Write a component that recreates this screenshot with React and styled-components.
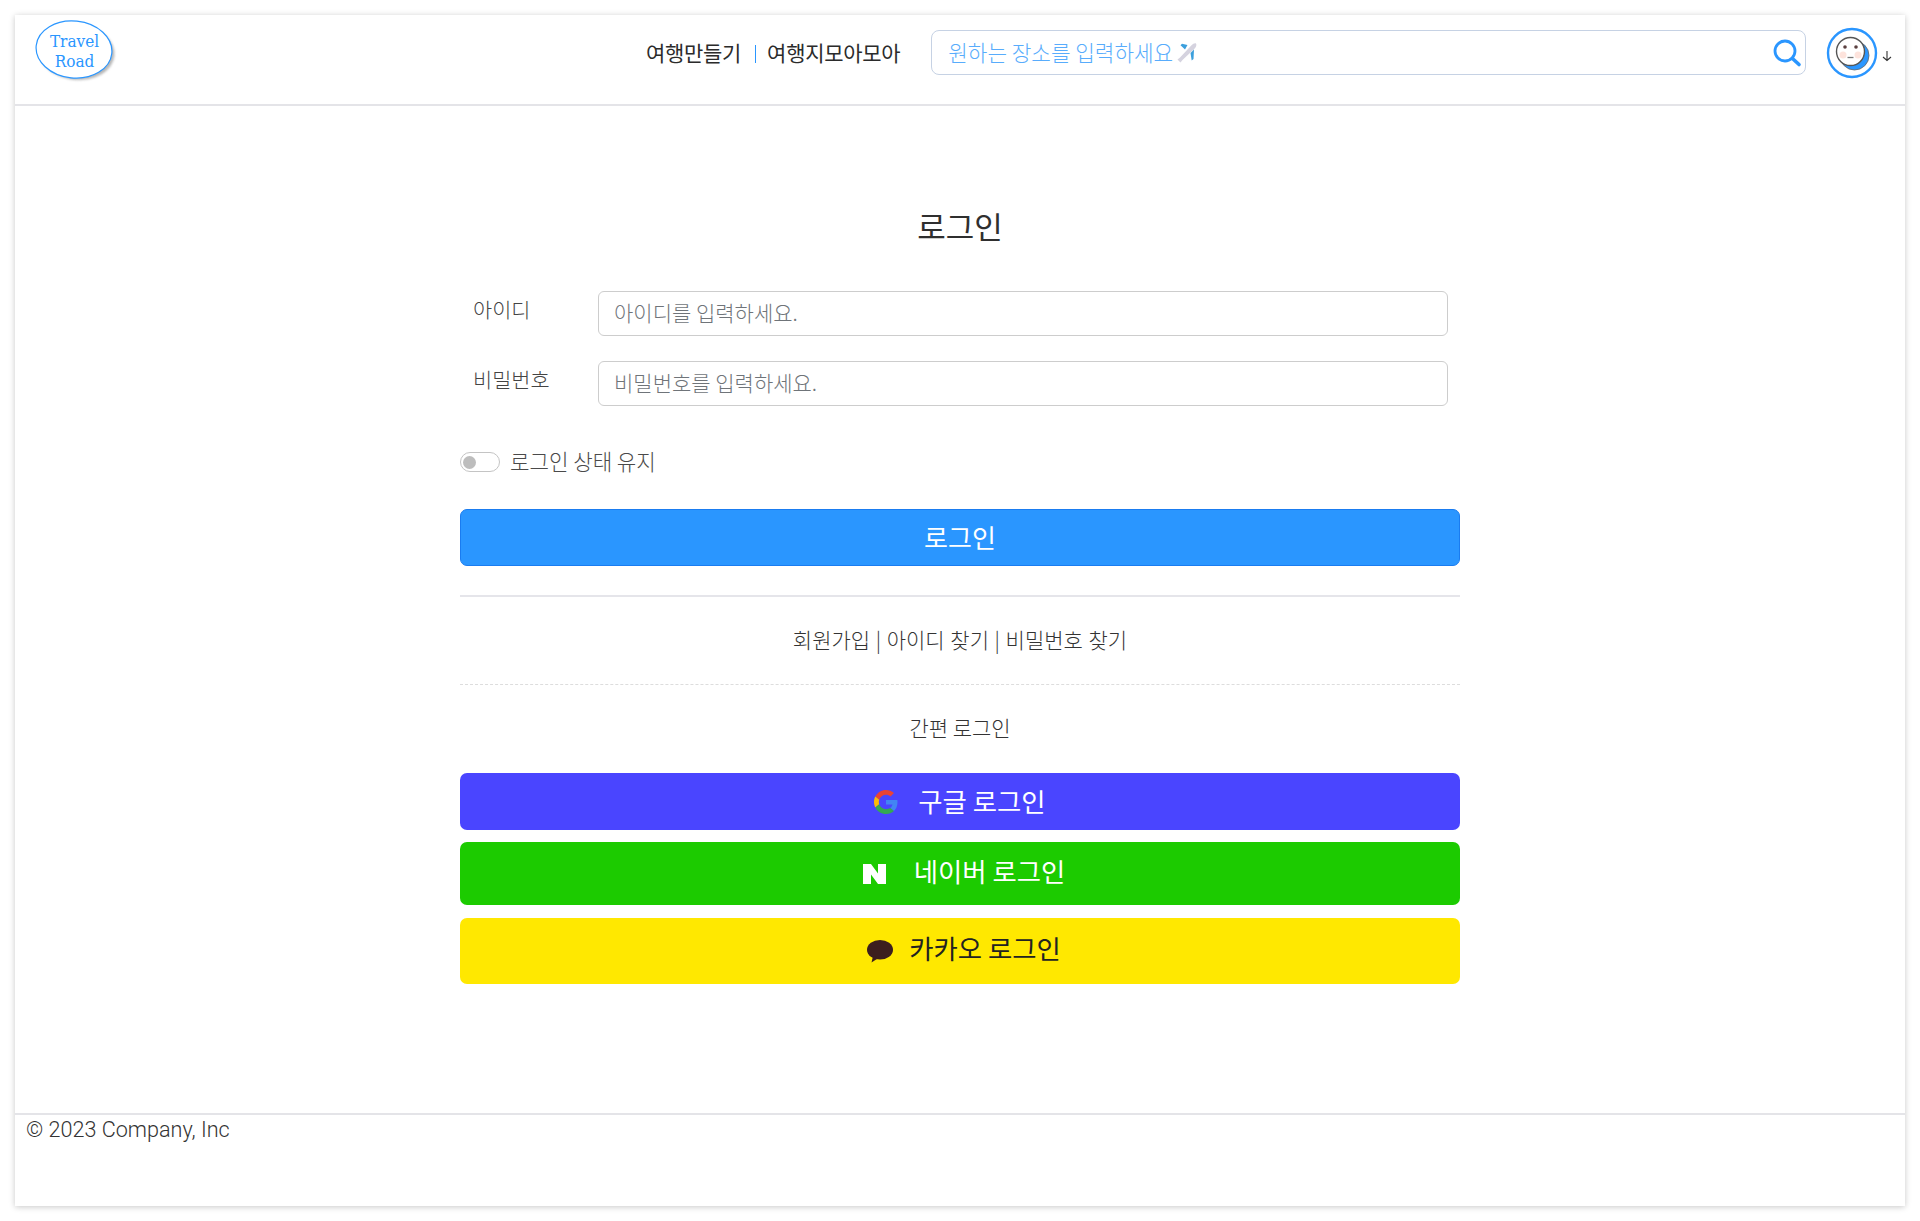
import React from 'react';
import styled, { createGlobalStyle } from 'styled-components';

const GlobalStyle = createGlobalStyle`
  html, body {
    margin: 0;
    padding: 0;
    background: #fff;
  }
  body {
    font-family: "Noto Sans CJK KR", "Noto Sans", sans-serif;
    font-weight: 300;
    color: #333;
  }
  * {
    box-sizing: border-box;
  }
`;

const Page = styled.div`
  height: 1221px;
  padding: 15px;
`;

const Card = styled.div`
  height: 1191px;
  display: flex;
  flex-direction: column;
  background: #fff;
  box-shadow: 0 1px 6px rgba(0, 0, 0, 0.22);
`;

// Header
const Header = styled.header`
  height: 91px;
  flex: none;
  display: flex;
  align-items: flex-start;
  border-bottom: 2px solid #e4e4e8;
  padding: 3px 12px 0 20px;
`;

const Logo = styled.svg`
  width: 84px;
  height: 66px;
  flex: none;
`;

const Nav = styled.nav`
  display: flex;
  align-items: center;
  height: 43px;
  margin: 12px 0 0 527px;
  font-size: 21px;
  font-weight: 400;
  color: #2b2b2b;
  letter-spacing: -0.3px;
  white-space: nowrap;
`;

const NavSeparator = styled.span`
  width: 1px;
  height: 18px;
  margin: 4px 11px 0 14px;
  background: #2a96ff;
`;

const SearchBox = styled.div`
  width: 875px;
  height: 45px;
  flex: none;
  margin: 12px 0 0 31px;
  display: flex;
  align-items: center;
  padding: 0 3px 0 16px;
  border: 1px solid #c6d2e4;
  border-radius: 8px;
`;

const SearchPlaceholder = styled.span`
  flex: 1;
  display: flex;
  align-items: center;
  gap: 3px;
  font-size: 21.3px;
  color: #58acfc;
  white-space: nowrap;
`;

const SearchText = styled.span`
  margin-bottom: 3px;
`;

const AvatarButton = styled.div`
  display: flex;
  align-items: center;
  margin: 9px 0 0 20px;
`;

// Login form
const Main = styled.main`
  flex: 1;
  display: flex;
  flex-direction: column;
  align-items: center;
  padding-top: 98px;
`;

const Title = styled.h1`
  margin: 0 0 43px;
  font-size: 31px;
  line-height: 44px;
  font-weight: 400;
  color: #2f2f2f;
`;

const Form = styled.div`
  width: 1000px;
`;

const FieldRow = styled.label`
  display: grid;
  grid-template-columns: 125px 850px;
  padding-left: 13px;
  margin-bottom: 25px;
`;

const FieldLabel = styled.span`
  font-size: 20.8px;
  line-height: 36px;
  color: #444;
`;

const FieldInput = styled.input`
  width: 850px;
  height: 45px;
  padding: 0 15px 3px;
  border: 1px solid #cdcdcd;
  border-radius: 6px;
  font-family: inherit;
  font-weight: 300;
  font-size: 21px;
  color: #333;
  &::placeholder {
    color: #6f7479;
    opacity: 1;
  }
`;

const KeepRow = styled.div`
  display: flex;
  align-items: center;
  gap: 10px;
  margin: 44px 0 0;
  height: 24px;
  font-size: 21.2px;
  color: #4a4a4a;
`;

const KeepText = styled.span`
  margin-bottom: 3px;
`;

const Toggle = styled.span`
  display: block;
  width: 40px;
  height: 20px;
  padding: 3px 2px;
  border: 1px solid #c4c4c4;
  border-radius: 10px;
  background: #fff;
  &::before {
    content: '';
    display: block;
    width: 13px;
    height: 13px;
    border-radius: 50%;
    background: #bdbdbd;
  }
`;

const LoginButton = styled.button`
  display: block;
  width: 100%;
  height: 57px;
  margin-top: 35px;
  padding: 0 0 3px;
  border: 1px solid #1a7cf0;
  border-radius: 7px;
  background: #2a96ff;
  color: #fff;
  font-family: inherit;
  font-weight: 400;
  font-size: 26px;
`;

const LinksRow = styled.div`
  margin-top: 29px;
  height: 90px;
  padding-bottom: 4px;
  display: flex;
  align-items: center;
  justify-content: center;
  border-top: 2px solid #e5e5ea;
  border-bottom: 1px dashed #ddd;
  font-size: 21px;
  color: #333;
  word-spacing: 1px;
`;

const SocialTitle = styled.div`
  height: 88px;
  padding-bottom: 4px;
  display: flex;
  align-items: center;
  justify-content: center;
  font-size: 21px;
  color: #333;
`;

const SocialButton = styled.div`
  width: 100%;
  height: ${(p) => p.$height}px;
  margin-bottom: ${(p) => p.$gap}px;
  padding-left: ${(p) => p.$shift}px;
  display: flex;
  align-items: center;
  justify-content: center;
  gap: ${(p) => p.$iconGap}px;
  border-radius: 7px;
  background: ${(p) => p.$bg};
  color: ${(p) => p.$color};
  font-size: 26.4px;
  font-weight: 400;
`;

const SocialLabel = styled.span`
  margin-bottom: ${(p) => p.$lift}px;
`;

// Footer
const Footer = styled.footer`
  height: 93px;
  flex: none;
  border-top: 2px solid #e4e4e8;
  padding: 0 11px;
  font-family: Roboto, "Liberation Sans", sans-serif;
  font-weight: 300;
  font-size: 21.6px;
  line-height: 30px;
  color: #333;
`;

const PlaneIcon = () => (
  <svg width="22" height="22" viewBox="0 0 22 22">
    <path d="M20 1.500c-1.300-.5-3 .3-4.500 1.800L4 15.500l-2.500 2 3 3 2-2.500L18.700 6.500C20.200 5 20.800 2.800 20 1.500z" fill="#d5d3df" />
    <path d="M11.500 3L6 1.800 4.500 3.300 9 7.500zM14.500 11l1.200 7.500 1.800-1.500 .5-9.500z" fill="#3c9fdc" />
  </svg>
);

const SearchIcon = () => (
  <svg width="30" height="30" viewBox="0 0 30 30" fill="none" stroke="#2a96ff" strokeLinecap="round">
    <circle cx="13" cy="13" r="10" strokeWidth="2.800" />
    <path d="M21 21l6 5.500" strokeWidth="3.600" />
  </svg>
);

const AvatarIcon = () => (
  <svg width="52" height="52" viewBox="0 0 52 52">
    <circle cx="26" cy="26" r="24" fill="#fff" stroke="#2a96ff" strokeWidth="2.400" />
    <circle cx="28.500" cy="28.500" r="14.500" fill="#2a96ff" stroke="#666" strokeWidth="0.800" />
    <circle cx="24.500" cy="24.500" r="14" fill="#fff" stroke="#555" strokeWidth="1.400" />
    <circle cx="17" cy="28" r="3.500" fill="#fde3dc" />
    <circle cx="32" cy="28" r="3.500" fill="#fde3dc" />
    <circle cx="19" cy="20" r="1.800" fill="#5b4040" />
    <circle cx="30" cy="20" r="1.800" fill="#5b4040" />
    <path d="M21.500 30.500h6" stroke="#777" strokeWidth="1.300" />
  </svg>
);

const DownArrow = () => (
  <svg width="10" height="12" viewBox="0 0 10 12" fill="none" stroke="#333" strokeWidth="1.100" style={{ marginLeft: 4, marginTop: 5 }}>
    <path d="M5 1v9M1 7l4 3.500L9 7" />
  </svg>
);

const GoogleIcon = () => (
  <svg width="24" height="24" viewBox="0 0 48 48">
    <path fill="#ea4335" d="M24 9.500c3.500 0 6.700 1.300 9.100 3.400l6.800-6.800C35.800 2.400 30.200 0 24 0 14.600 0 6.500 5.400 2.600 13.200l7.900 6.100C12.400 13.600 17.700 9.500 24 9.500z" />
    <path fill="#4285f4" d="M47 24.500c0-1.600-.2-3.100-.4-4.500H24v9h13c-.6 3-2.200 5.500-4.800 7.200l7.700 6C44.400 37.900 47 31.800 47 24.500z" />
    <path fill="#fbbc05" d="M10.500 28.700c-.5-1.400-.8-3-.8-4.700s.3-3.300.8-4.700l-7.900-6.100C1 16.400 0 20.100 0 24s1 7.600 2.600 10.800z" />
    <path fill="#34a853" d="M24 48c6.500 0 11.900-2.100 15.900-5.800l-7.700-6c-2.200 1.400-4.900 2.300-8.200 2.300-6.300 0-11.600-4.100-13.500-9.800l-7.900 6.100C6.500 42.600 14.600 48 24 48z" />
  </svg>
);

const NaverIcon = () => (
  <svg width="23" height="20" viewBox="0 0 23 20">
    <path fill="#fff" d="M0 0h8l7 9.500V0h8v20h-8L8 10.500V20H0z" />
  </svg>
);

const KakaoIcon = () => (
  <svg width="26" height="23" viewBox="0 0 26 23">
    <ellipse cx="13" cy="9.800" rx="13" ry="9.800" fill="#3c1e1e" />
    <path fill="#3c1e1e" d="M6 16l-1.500 6.500 7-4.500z" />
  </svg>
);

const App = () => (
  <>
    <GlobalStyle />
    <Page>
      <Card>
        <Header>
          <Logo viewBox="0 0 84 66">
            <defs>
              <filter id="logoShadow" x="-20%" y="-20%" width="140%" height="140%">
                <feGaussianBlur stdDeviation="1.200" />
              </filter>
            </defs>
            <ellipse cx="41.500" cy="34" rx="38" ry="28" transform="rotate(6 41 34)" fill="#999" opacity="0.7" filter="url(#logoShadow)" />
            <ellipse cx="39" cy="31.500" rx="38" ry="28.500" transform="rotate(6 39 31.500)" fill="#fff" stroke="#2a96ff" strokeWidth="1.200" />
            <text x="39.500" y="29" textAnchor="middle" fontFamily="DejaVu Serif Condensed, DejaVu Serif, serif" fontSize="17" fill="#2a96ff">Travel</text>
            <text x="39.500" y="49" textAnchor="middle" fontFamily="DejaVu Serif Condensed, DejaVu Serif, serif" fontSize="17" fill="#2a96ff">Road</text>
          </Logo>
          <Nav>
            <span>여행만들기</span>
            <NavSeparator />
            <span>여행지모아모아</span>
          </Nav>
          <SearchBox>
            <SearchPlaceholder>
              <SearchText>원하는 장소를 입력하세요</SearchText>
              <PlaneIcon />
            </SearchPlaceholder>
            <SearchIcon />
          </SearchBox>
          <AvatarButton>
            <AvatarIcon />
            <DownArrow />
          </AvatarButton>
        </Header>
        <Main>
          <Title>로그인</Title>
          <Form>
            <FieldRow>
              <FieldLabel>아이디</FieldLabel>
              <FieldInput placeholder="아이디를 입력하세요." />
            </FieldRow>
            <FieldRow>
              <FieldLabel>비밀번호</FieldLabel>
              <FieldInput type="password" placeholder="비밀번호를 입력하세요." />
            </FieldRow>
            <KeepRow>
              <Toggle />
              <KeepText>로그인 상태 유지</KeepText>
            </KeepRow>
            <LoginButton>로그인</LoginButton>
            <LinksRow>회원가입 | 아이디 찾기 | 비밀번호 찾기</LinksRow>
            <SocialTitle>간편 로그인</SocialTitle>
            <SocialButton $bg="#4a45ff" $color="#fff" $height={57} $gap={12} $iconGap={20} $shift={0}>
              <GoogleIcon />
              <SocialLabel $lift={2}>구글 로그인</SocialLabel>
            </SocialButton>
            <SocialButton $bg="#1ccb00" $color="#fff" $height={63} $gap={13} $iconGap={28} $shift={8}>
              <NaverIcon />
              <SocialLabel $lift={6}>네이버 로그인</SocialLabel>
            </SocialButton>
            <SocialButton $bg="#ffe800" $color="#222" $height={66} $gap={0} $iconGap={16} $shift={8}>
              <KakaoIcon />
              <SocialLabel $lift={8}>카카오 로그인</SocialLabel>
            </SocialButton>
          </Form>
        </Main>
        <Footer>© 2023 Company, Inc</Footer>
      </Card>
    </Page>
  </>
);

export default App;
